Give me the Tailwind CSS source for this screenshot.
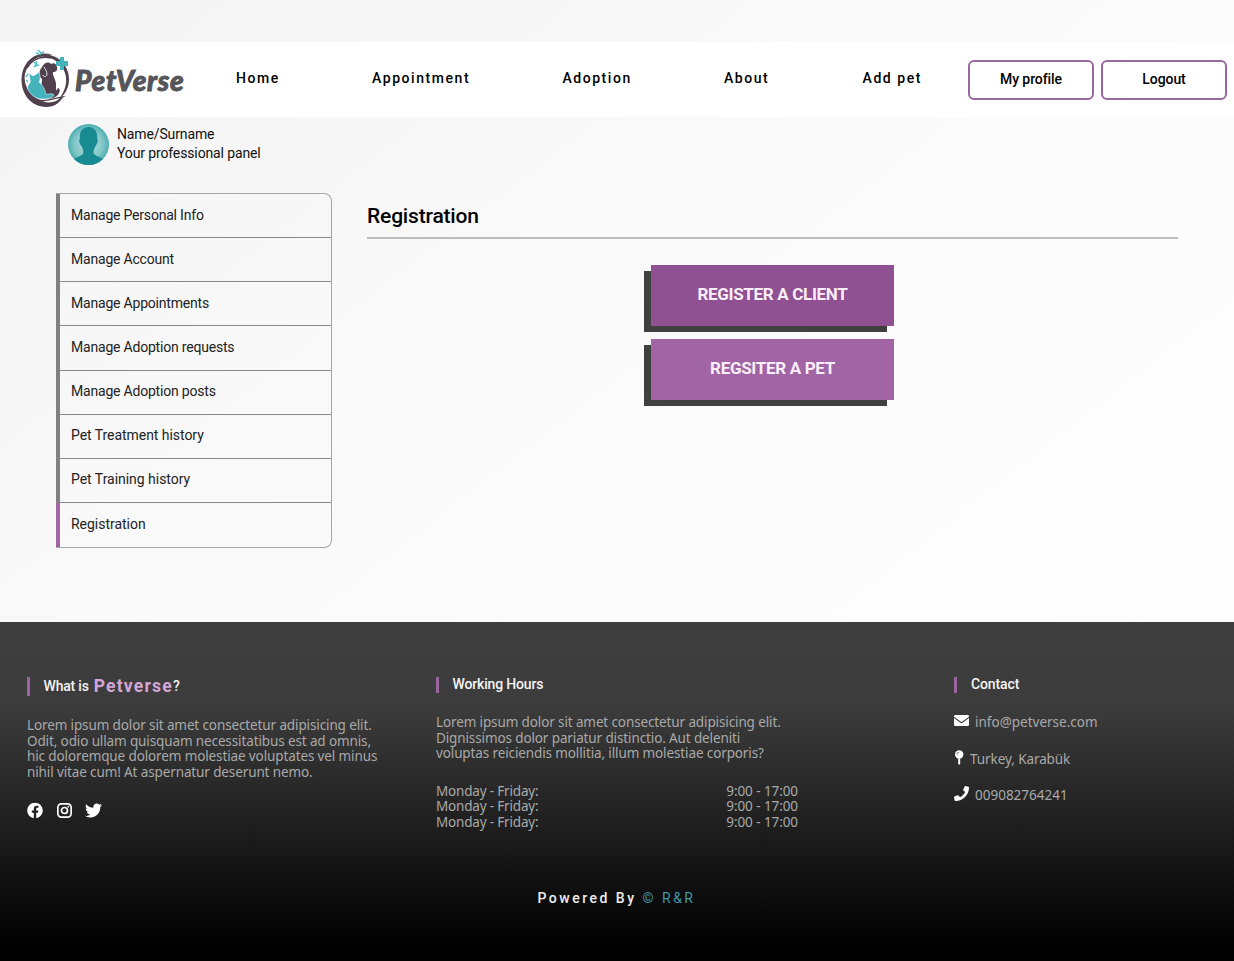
<!DOCTYPE html>
<html lang="en">
<head>
<meta charset="utf-8">
<title>PetVerse</title>
<script src="https://cdn.jsdelivr.net/npm/@tailwindcss/browser@4"></script>
</head>
<body class="w-[1234px] h-[961px] overflow-hidden flex flex-col bg-linear-to-br from-[#f4f4f4] via-[#fbfbfb] to-white font-['Roboto',sans-serif] text-[14px] text-[#111] whitespace-nowrap">
<header class="mt-[42px] h-[75px] shrink-0 bg-white flex items-center pl-[20px] pr-[7px]">
  <a class="flex items-center w-[216px]">
    <svg class="w-[50px] h-[62px] shrink-0" viewBox="0 0 50 62" fill="none">
      <path d="M33 6C20 1 5 9 2 25C-1 43 10 58 26 58C33 58 39 55 43 48C36 54 27 55 20 51C9 46 3 35 5 25C8 12 20 4 33 6Z" fill="#51404d"/>
      <path d="M14 9C25 1 43 7 48 23C51 34 47 45 39 50C45 42 48 33 45 24C41 11 27 5 14 9Z" fill="#51404d"/>
      <path d="M7 19C13 9 22 7 31 9M14 49C23 55 32 49 43 48L36 53C29 57 20 57 12 49" stroke="#51404d" stroke-width="1.4"/>
      <path d="M24 48C20 41 22 34 22 30C19 28 18 23 22 18C24 14 28 12 31 15C34 13 36 15 37 18C38 21 36 23 33 23C32 27 37 31 36 38C36 41 36 43 38 39C41 39 40 46 35 48C31 50 26 50 24 48Z" fill="#51404d"/>
      <path d="M24 18C26 21 27 23 27 26C26 28 23 28 23 26" stroke="#fff" stroke-width=".8"/>
      <path d="M9 24L13 27C15 26 17 25 19 23C21 29 20 31 19 33C23 36 25 41 26 45C29 46 31 43 34 46C33 49 28 50 22 50C16 50 12 47 8 41C6 35 12 34 10 31Z" fill="#44b3bc" stroke="#fff" stroke-width=".5"/>
      <path d="M40 8H44V12H48V17H44V21H40V17H36V12H40Z" fill="#44b3bc"/>
      <path d="M18 1L21 4L24 3M21 4L20 6M16 4L19 5M17 14L14 18M19 16L15 17M17 13L14 14M8 25L6 28M6 31L8 33" stroke="#58bbc4" stroke-width="1.400"/>
    </svg>
    <span class="ml-[5px] font-['Lato',sans-serif] font-black italic text-[28px] tracking-[0.700px] leading-none text-[#55555a] [-webkit-text-stroke:0.900px_#55555a]">PetVerse</span>
  </a>
  <nav class="flex justify-between w-[686px] pb-[2px] text-[14px] font-medium tracking-[1.550px] text-black">
    <a>Home</a><a class="-ml-px">Appointment</a><a class="-ml-px">Adoption</a><a class="-ml-px">About</a><a>Add pet</a>
  </nav>
  <div class="ml-auto mt-px flex gap-[7px] text-black font-medium text-[14px] tracking-[-0.070px]">
    <a class="w-[126px] h-[40px] rounded-[6px] border-2 border-[#9a68a1] flex items-center justify-center pb-px">My profile</a>
    <a class="w-[126px] h-[40px] rounded-[6px] border-2 border-[#9a68a1] flex items-center justify-center pb-px">Logout</a>
  </div>
</header>

<section class="h-[76px] shrink-0 pl-[68px] pt-[7px] flex items-start gap-[8px]">
  <svg class="w-[41px] h-[41px]" viewBox="0 0 41 41">
    <defs><radialGradient id="halo"><stop offset="0" stop-color="#b5dedf"/><stop offset=".7" stop-color="#83c6c8"/><stop offset="1" stop-color="#4caeb1"/></radialGradient><clipPath id="disc"><circle cx="20.500" cy="20.500" r="20.500"/></clipPath></defs>
    <g clip-path="url(#disc)"><path d="M0 0H41V41H0Z" fill="url(#halo)"/><path d="M20.500 3C14 3 11 8 12 15C10 15 12 21 13.500 22C15 26 16 27 15 30C12 33 8 33 4 36L10 41H31L37 36C33 33 29 33 26 30C25 27 26 26 27.500 22C29 21 31 15 29 15C30 8 27 3 20.500 3Z" fill="#188b92"/></g>
  </svg>
  <div class="leading-[19px] mt-px tracking-[-0.130px]"><p>Name/Surname</p><p>Your professional panel</p></div>
</section>

<main class="flex items-start h-[429px] shrink-0 pl-[56px] pr-[56px]">
  <ul class="w-[276px] h-[355px] grid grid-rows-8 rounded-r-[8px] border-y border-r border-[#a6a6a6] overflow-hidden tracking-[-0.200px] text-[#222]">
    <li class="flex items-center border-l-4 border-l-[#808080] border-b border-b-[#8a8a8a] pl-[11px] pb-px">Manage Personal Info</li>
    <li class="flex items-center border-l-4 border-l-[#808080] border-b border-b-[#8a8a8a] pl-[11px] pb-px">Manage Account</li>
    <li class="flex items-center border-l-4 border-l-[#808080] border-b border-b-[#8a8a8a] pl-[11px] pb-px">Manage Appointments</li>
    <li class="flex items-center border-l-4 border-l-[#808080] border-b border-b-[#8a8a8a] pl-[11px] pb-px">Manage Adoption requests</li>
    <li class="flex items-center border-l-4 border-l-[#808080] border-b border-b-[#8a8a8a] pl-[11px] pb-px">Manage Adoption posts</li>
    <li class="flex items-center border-l-4 border-l-[#808080] border-b border-b-[#8a8a8a] pl-[11px] pb-px tracking-[-0.050px]">Pet Treatment history</li>
    <li class="flex items-center border-l-4 border-l-[#808080] border-b border-b-[#8a8a8a] pl-[11px] pb-px tracking-[-0.030px]">Pet Training history</li>
    <li class="flex items-center border-l-4 border-l-[#a066a6] pl-[11px] pb-px tracking-[-0.020px]">Registration</li>
  </ul>
  <section class="ml-[35px] flex-1 flex flex-col">
    <h1 class="h-[46px] border-b-2 border-[#bdbdbd] pt-[10px] text-[21px] leading-[27px] tracking-[-0.170px] font-medium text-black">Registration</h1>
    <div class="mt-[26px] ml-[284px] w-[243px] flex flex-col gap-[13px] text-[17px] tracking-[-0.320px] font-bold text-[#fbeefb]">
      <a class="h-[61px] bg-[#8f5191] shadow-[-7px_6px_0_#404040] flex items-center justify-center pb-px">REGISTER A CLIENT</a>
      <a class="h-[61px] bg-[#a164a5] shadow-[-7px_6px_0_#404040] flex items-center justify-center pb-px">REGSITER A PET</a>
    </div>
  </section>
</main>

<footer class="flex-1 flex flex-col bg-[linear-gradient(#3e3e3e_0%,#3c3c3c_25%,#000_96%)] text-[#a9a9a9] font-['Noto_Sans',sans-serif] text-[13.500px] tracking-[-0.120px] leading-[15.700px]">
  <div class="flex h-[269px] pt-[55px] pl-[27px]">
    <section class="w-[409px]">
      <h2 class="flex items-center h-[19px] border-l-[3px] border-[#9b669f] pl-[13.500px] font-['Roboto',sans-serif] text-[14px] font-medium text-[#f4f4f4] tracking-[-0.200px]"><span>What is</span><b class="ml-[5px] text-[17.500px] tracking-[1.200px] text-[#d3a6d6]">Petverse</b><span>?</span></h2>
      <p class="mt-[22px]">Lorem ipsum dolor sit amet consectetur adipisicing elit.<br>Odit, odio ullam quisquam necessitatibus est ad omnis,<br>hic doloremque dolorem molestiae voluptates vel minus<br>nihil vitae cum! At aspernatur deserunt nemo.</p>
      <div class="mt-[21px] flex gap-[13px] text-white">
        <svg class="w-[16px] h-[17px]" viewBox="0 0 512 512" fill="currentColor"><path d="M504 256C504 119 393 8 256 8S8 119 8 256c0 123.800 90.700 226.400 209.300 245V327.700h-63V256h63v-54.600c0-62.200 37-96.500 93.700-96.500 27.100 0 55.500 4.800 55.500 4.800v61h-31.300c-30.800 0-40.400 19.100-40.400 38.700V256h68.800l-11 71.700h-57.800V501C413.300 482.400 504 379.800 504 256z"/></svg>
        <svg class="w-[17px] h-[17px]" viewBox="0 0 17 17" fill="none" stroke="currentColor" stroke-width="1.700"><rect x="1.850" y="1.850" width="13.300" height="13.300" rx="3.600"/><circle cx="8.500" cy="8.500" r="3"/><circle cx="12.300" cy="4.700" r=".9" fill="currentColor" stroke="none"/></svg>
        <svg class="w-[17px] h-[17px] -ml-px" viewBox="0 0 512 512" fill="currentColor"><path d="M459.400 151.700c.3 4.500.3 9.100.3 13.600 0 138.700-105.600 298.600-298.600 298.600-59.500 0-114.700-17.200-161.100-47.100 8.400 1 16.600 1.300 25.300 1.300 49.100 0 94.200-16.600 130.300-44.800-46.100-1-84.800-31.200-98.100-72.800 6.500 1 13 1.600 19.800 1.600 9.400 0 18.800-1.300 27.600-3.600-48.100-9.700-84.100-52-84.100-103v-1.300c14 7.800 30.200 12.700 47.400 13.300-28.300-18.800-46.800-51-46.800-87.400 0-19.500 5.200-37.400 14.300-53 51.700 63.700 129.300 105.300 216.400 109.800-1.600-7.800-2.600-15.900-2.600-24 0-57.800 46.800-104.900 104.900-104.900 30.200 0 57.500 12.700 76.700 33.100 23.700-4.500 46.500-13.300 66.600-25.300-7.800 24.400-24.400 44.800-46.100 57.800 21.100-2.300 41.600-8.100 60.400-16.200-14.300 20.800-32.200 39.300-52.600 54.300z"/></svg>
      </div>
    </section>
    <section class="w-[518px]">
      <h2 class="flex items-center h-[16px] border-l-[3px] border-[#9b669f] pl-[13.500px] font-['Roboto',sans-serif] text-[14px] font-medium tracking-[-0.170px] text-[#f4f4f4]">Working Hours</h2>
      <p class="mt-[22px]">Lorem ipsum dolor sit amet consectetur adipisicing elit.<br>Dignissimos dolor pariatur distinctio. Aut deleniti<br>voluptas reiciendis mollitia, illum molestiae corporis?</p>
      <div class="mt-[21.500px] w-[362px] flex justify-between tracking-[-0.180px]"><p>Monday - Friday:<br>Monday - Friday:<br>Monday - Friday:</p><p class="tracking-[-0.080px]">9:00 - 17:00<br>9:00 - 17:00<br>9:00 - 17:00</p></div>
    </section>
    <section class="tracking-normal">
      <h2 class="flex items-center h-[16px] border-l-[3px] border-[#9b669f] pl-[14px] font-['Roboto',sans-serif] text-[14px] font-medium tracking-[-0.120px] text-[#f4f4f4]">Contact</h2>
      <p class="mt-[22px] flex items-center h-[16px]"><svg class="w-[15px] h-[11px] mr-[6px] mb-[5px] text-white" viewBox="0 0 15 11" fill="currentColor"><path d="M1.400 0H13.600Q15 0 15 1.300V1.800L8.500 6.500Q7.500 7.200 6.500 6.500L0 1.800V1.300Q0 0 1.400 0ZM0 3L6 7.400Q7.500 8.400 9 7.400L15 3V9.700Q15 11 13.600 11H1.400Q0 11 0 9.700Z"/></svg>info@petverse.com</p>
      <p class="mt-[21px] flex items-center h-[16px] tracking-[-0.080px]"><svg class="w-[10px] h-[15px] mr-[6px] mb-[5px] text-white" viewBox="0 0 10 15"><circle cx="5.200" cy="4.500" r="4.200" fill="currentColor"/><path d="M4.200 8.500H6.200V13.500L5.200 15L4.200 13.500Z" fill="currentColor"/><path d="M2.900 4.500A2.300 2.300 0 0 1 5.200 2.200" fill="none" stroke="#555" stroke-width=".8"/></svg>Turkey, Karabük</p>
      <p class="mt-[20px] flex items-center h-[16px]"><svg class="w-[15px] h-[15px] mr-[6px] mb-[5px] text-white" viewBox="0 0 512 512" fill="currentColor"><path d="M493.400 24.600l-104-24c-11.300-2.600-22.900 3.300-27.500 13.900l-48 112c-4.200 9.800-1.400 21.300 6.900 28l60.600 49.600c-36 76.700-98.900 140.500-177.200 177.200l-49.600-60.600c-6.800-8.300-18.200-11.100-28-6.900l-112 48C3.900 366.500-2 378.100.6 389.400l24 104C27.100 504.200 36.700 512 48 512c256.100 0 464-207.500 464-464 0-11.200-7.700-20.900-18.600-23.400z"/></svg>009082764241</p>
    </section>
  </div>
  <p class="text-center pr-px font-['Roboto',sans-serif] text-[14px] font-medium tracking-[2.500px] text-[#eee]">Powered By <span class="text-[#4197a5] font-normal">© R&amp;R</span></p>
</footer>
</body>
</html>
